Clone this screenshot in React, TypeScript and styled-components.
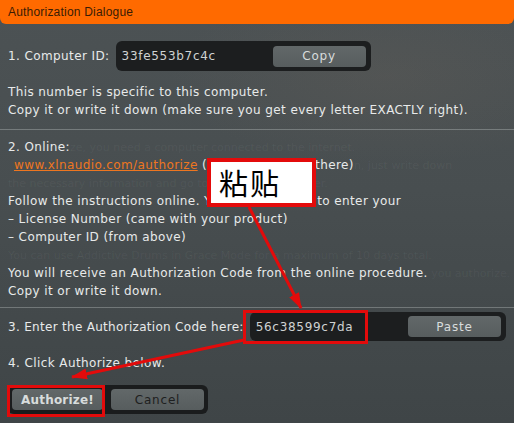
import React from 'react';
import styled, { createGlobalStyle } from 'styled-components';

const GlobalStyle = createGlobalStyle`
  html, body {
    margin: 0;
    padding: 0;
    background: #444a4c;
  }
  body {
    font-family: "DejaVu Sans", Verdana, sans-serif;
  }
`;

const Dialog = styled.div`
  position: relative;
  width: 514px;
  height: 423px;
  overflow: hidden;
  background:
    radial-gradient(ellipse 60% 30% at 75% 18%, rgba(110, 100, 90, 0.22), transparent 70%),
    linear-gradient(180deg, #4c5254 0%, #484e50 45%, #43494b 75%, #3f4547 100%);
  color: #e8eaea;
  font-size: 12px;
  letter-spacing: 0.4px;
`;

const TitleBar = styled.div`
  height: 24px;
  background: #ff6a00;
  border-radius: 0 0 6px 6px;
  color: #3a1c05;
  font-family: "Liberation Sans", Arial, sans-serif;
  font-size: 12px;
  letter-spacing: 0.2px;
  display: flex;
  align-items: center;
  padding: 0 8px;
`;

const Body = styled.div`
  padding: 17px 8px 0 8px;
  display: flex;
  flex-direction: column;
`;

const Row = styled.div<{ $gap?: number }>`
  display: flex;
  align-items: center;
  gap: ${(p) => p.$gap ?? 6}px;
`;

const Label = styled.span<{ $tight?: boolean }>`
  white-space: nowrap;
  letter-spacing: ${(p) => (p.$tight ? 0.3 : 0.4)}px;
`;

const Field = styled.div<{ $width: number; $height: number }>`
  width: ${(p) => p.$width}px;
  height: ${(p) => p.$height}px;
  box-sizing: border-box;
  background: #1c1e1f;
  border-radius: 6px;
  display: flex;
  align-items: center;
  justify-content: space-between;
  padding: 0 5px 0 6px;
`;

const Code = styled.span`
  color: #cfd2d2;
  letter-spacing: 0.7px;
`;

const Button = styled.div<{ $width: number; $dark?: boolean; $bold?: boolean }>`
  width: ${(p) => p.$width}px;
  height: 21px;
  border-radius: 4px;
  background: linear-gradient(180deg, #626869 0%, #575d5e 100%);
  display: flex;
  align-items: center;
  justify-content: center;
  color: ${(p) => (p.$dark ? '#1e2020' : '#d8dcdc')};
  font-weight: ${(p) => (p.$bold ? 700 : 400)};
  letter-spacing: ${(p) => (p.$bold ? 0.2 : 0.8)}px;
`;

const Line = styled.div`
  height: 18px;
  line-height: 18px;
  white-space: nowrap;
`;

const Ghost = styled.span`
  color: rgba(255, 255, 255, 0.06);
  font-size: 11px;
  letter-spacing: 0;
`;

const Link = styled.span`
  color: #ee7620;
  text-decoration: underline;
  margin-left: 6px;
`;

const Separator = styled.div<{ $top: number; $bottom: number }>`
  height: 1px;
  margin: ${(p) => p.$top}px -8px ${(p) => p.$bottom}px;
  background: rgba(200, 205, 205, 0.35);
`;

const ButtonTray = styled.div`
  width: 200px;
  height: 29px;
  box-sizing: border-box;
  background: #1a1c1d;
  border-radius: 6px;
  display: flex;
  align-items: center;
  gap: 8px;
  padding: 0 4px;
  margin-top: 13px;
`;

const Highlight = styled.div<{ $x: number; $y: number; $w: number; $h: number }>`
  position: absolute;
  left: ${(p) => p.$x}px;
  top: ${(p) => p.$y}px;
  width: ${(p) => p.$w}px;
  height: ${(p) => p.$h}px;
  box-sizing: border-box;
  border: 3px solid #e30b0b;
`;

const Callout = styled.div`
  position: absolute;
  left: 207px;
  top: 158px;
  width: 109px;
  height: 49px;
  box-sizing: border-box;
  background: #fff;
  border: 4px solid #e30b0b;
  color: #000;
  font-family: "Noto Sans CJK SC", sans-serif;
  font-size: 29px;
  letter-spacing: 2px;
  line-height: 40px;
  padding-left: 8px;
`;

const Arrows = styled.svg`
  position: absolute;
  left: 0;
  top: 0;
  pointer-events: none;
`;

function App() {
  return (
    <>
      <GlobalStyle />
      <Dialog>
        <TitleBar>Authorization Dialogue</TitleBar>
        <Body>
          <Row>
            <Label>1. Computer ID:</Label>
            <Field $width={255} $height={30}>
              <Code>33fe553b7c4c</Code>
              <Button $width={93}>Copy</Button>
            </Field>
          </Row>
          <Line style={{ marginTop: 12 }}>This number is specific to this computer.</Line>
          <Line>Copy it or write it down (make sure you get every letter EXACTLY right).</Line>
          <Separator $top={10} $bottom={8} />
          <Line>
            2. Online:<Ghost>ze, you need a computer connected to the internet.</Ghost>
          </Line>
          <Line>
            <Link>www.xlnaudio.com/authorize</Link> (click here to get there)
            <Ghost>n, just write down</Ghost>
          </Line>
          <Line>
            <Ghost>the necessary information and go to a different computer.</Ghost>
          </Line>
          <Line>Follow the instructions online. You will be asked to enter your</Line>
          <Line>– License Number (came with your product)</Line>
          <Line>– Computer ID (from above)</Line>
          <Line>
            <Ghost>You can use Addictive Drums in Grace Mode for a maximum of 10 days total.</Ghost>
          </Line>
          <Line>
            You will receive an Authorization Code from the online procedure.
            <Ghost> you authorize.</Ghost>
          </Line>
          <Line>Copy it or write it down.</Line>
          <Separator $top={7} $bottom={4} />
          <Row $gap={6}>
            <Label $tight>3. Enter the Authorization Code here:</Label>
            <Field $width={257} $height={29}>
              <Code>56c38599c7da</Code>
              <Button $width={93}>Paste</Button>
            </Field>
          </Row>
          <Line style={{ marginTop: 13 }}>4. Click Authorize below.</Line>
          <ButtonTray>
            <Button $width={91} $bold>
              Authorize!
            </Button>
            <Button $width={93} $dark>
              Cancel
            </Button>
          </ButtonTray>
        </Body>

        <Highlight $x={243} $y={310} $w={125} $h={34} />
        <Highlight $x={7} $y={385} $w={98} $h={32} />
        <Callout>粘贴</Callout>

        <Arrows width={514} height={423} viewBox="0 0 514 423">
          <defs>
            <marker
              id="head"
              viewBox="0 0 16 11"
              refX="15"
              refY="5.5"
              markerUnits="userSpaceOnUse"
              markerWidth="16"
              markerHeight="11"
              orient="auto"
            >
              <path d="M0 0 L16 5.5 L0 11 Z" fill="#e30b0b" />
            </marker>
          </defs>
          <line x1="249" y1="207" x2="301" y2="308" stroke="#e30b0b" strokeWidth="3" markerEnd="url(#head)" />
          <line x1="244" y1="340" x2="72" y2="377" stroke="#e30b0b" strokeWidth="3" markerEnd="url(#head)" />
        </Arrows>
      </Dialog>
    </>
  );
}

export default App;
